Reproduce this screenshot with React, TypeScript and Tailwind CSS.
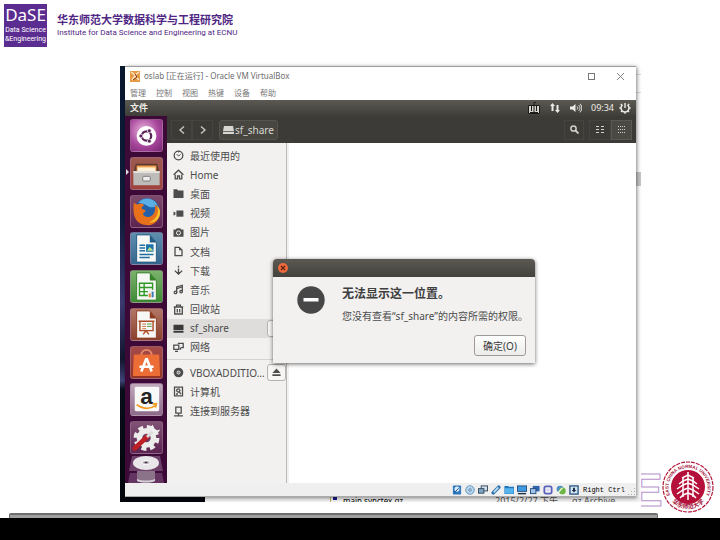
import type { ReactNode } from "react";

const sans = "font-['Noto_Sans','Noto_Sans_CJK_SC',sans-serif]";

const Glyph = ({ children }: { children: ReactNode }) => (
  <svg className="h-[11px] w-[11px] shrink-0" viewBox="0 0 11 11" fill="none" stroke="#4d4d4d" strokeWidth="1.3" aria-hidden="true">
    {children}
  </svg>
);

const places = [
  { name: "最近使用的", icon: <><circle cx="5.5" cy="5.5" r="4.3" /><path d="M5.5 6 3.7 4.2M5.5 6l2-1.5M5.5 1v1.5" strokeWidth="1" /></> },
  { name: "Home", icon: <><path d="M.6 5.8 5.5 1.2l4.9 4.6" /><path d="M2.2 5.5v4.3h2.3V7h2v2.8h2.3V5.5" /></> },
  { name: "桌面", icon: <path d="M.5 10V1.2h3.6L5 2.6h5.5V10z" fill="#4d4d4d" stroke="none" /> },
  { name: "视频", icon: <><path d="M3.4 2.5h7v6.2h-7z" fill="#4d4d4d" stroke="none" /><path d="M.5 3.5 2.5 4.5v2L.5 7.8z" fill="#4d4d4d" stroke="none" /></> },
  { name: "图片", icon: <><path d="M.5 2.5h2.4l.8-1.3h3.6l.8 1.3h2.4v7.3H.5z" fill="#4d4d4d" stroke="none" /><circle cx="5.5" cy="5.9" r="2" fill="#4d4d4d" stroke="#f2f1f0" strokeWidth="1" /></> },
  { name: "文档", icon: <><path d="M2 1.3h4.2L9 4.1v5.6H2z" /><path d="M6 1.3v3h3z" fill="#4d4d4d" stroke="none" /></> },
  { name: "下载", icon: <><path d="M5.5.8v1.6M5.5 3.6v5M1.8 5.6l3.7 3.6 3.7-3.6" /><path d="M5.5 9.8 3.6 7h3.8z" fill="#4d4d4d" stroke="none" /></> },
  { name: "音乐", icon: <><path d="M3.7 8.5V3l5.6-1.6v6" /><path d="M3.7 4.6 9.3 3" /><circle cx="2.5" cy="8.4" r="1.3" /><circle cx="8.1" cy="7.6" r="1.3" /></> },
  { name: "回收站", icon: <><path d="M.8 3h9.4M3.6 3V1.2h3.8V3M1.7 3v7h7.6V3" /><path d="M4.3 5v3.4M6.7 5v3.4" /></> },
  { name: "sf_share", icon: <><path d="M.5 1.8h10v5.4H.5zM.5 8h10v1.8H.5z" fill="#3a3a3a" stroke="none" /></> },
  { name: "网络", icon: <><path d="M4.8 1.3h5.4v4.4H8M.8 3.2h5v4.2h-5z" /><path d="M2 9.4h3M7.4 5.6v2.2" /></> },
];

const devices = [
  { name: "VBOXADDITIO…", eject: true, icon: <><circle cx="5.5" cy="5.5" r="4.8" fill="#4d4d4d" stroke="none" /><circle cx="5.5" cy="5.5" r="1.5" fill="#777" stroke="#f2f1f0" strokeWidth=".9" /></> },
  { name: "计算机", icon: <><path d="M1.5 1.2h8v8.6h-8z" /><circle cx="5.3" cy="4.4" r="1.6" /><path d="m6 5.6 2 2.6M3 8h2" /></> },
  { name: "连接到服务器", icon: <><path d="M2.8 1.2h5.4v6H2.8z" /><path d="M5.5 7v2.7M1 9.8h9" /></> },
];

const EjectIcon = () => (
  <svg className="h-[9px] w-[9px]" viewBox="0 0 9 9" fill="#4d4d4d" aria-hidden="true"><path d="M4.5.5 8.6 5H.4zM.4 6.3h8.2V8H.4z" /></svg>
);

const PlaceRow = ({ name, icon, eject, active }: { name: string; icon: ReactNode; eject?: boolean; active?: boolean }) => (
  <li className={active ? "flex min-h-0 flex-1 items-center bg-[#dedddc]" : "flex min-h-0 flex-1 items-center"}>
    <button type="button" className="flex min-w-0 flex-1 items-center gap-[6px] pl-[6px] text-left text-[10px] leading-[16px] text-[#4c4c4c]">
      <Glyph>{icon}</Glyph>
      <span className="whitespace-nowrap">{name}</span>
    </button>
    {(eject || active) && (
      <button type="button" aria-label={`弹出 ${name}`} className="flex h-[17px] w-[19px] shrink-0 items-center justify-center rounded-[3px] border border-[#b5b2ae] bg-[#f7f6f5]">
        {eject && <EjectIcon />}
      </button>
    )}
  </li>
);

const Page = ({ color, children }: { color: string; children: ReactNode }) => (
  <>
    <path d="M6 2h14l7 8v21H6z" fill="#f7f7f5" stroke={color} strokeWidth="1" />
    <path d="M20 2v8h7z" fill={color} />
    {children}
  </>
);

const launcher = [
  {
    name: "Dash", tile: "bg-[radial-gradient(circle_at_40%_35%,#e9b7dc,#a8479c_55%,#7a2675)]",
    art: <><circle cx="16.5" cy="17" r="10.5" fill="#fff" /><circle cx="16.5" cy="17" r="5" fill="none" stroke="#5b2356" strokeWidth="2.4" /><g fill="#5b2356" stroke="#fff" strokeWidth=".8"><circle cx="10.5" cy="17" r="2.1" /><circle cx="19.5" cy="11.5" r="2.1" /><circle cx="19.5" cy="22.5" r="2.1" /></g></>,
  },
  {
    name: "文件", tile: "bg-gradient-to-b from-[#9d5a50] to-[#a0413c]",
    art: <><path d="M5 6h23l2 9H3z" fill="#5b3a2e" /><path d="M6 8h21v7H6z" fill="#f3a04d" /><path d="M7 10h19v5H7z" fill="#fff1d6" /><path d="M2.5 14h28v15h-28z" fill="#bdbcb8" /><path d="M2.5 14h28v2h-28z" fill="#e4e3df" /><rect x="12.5" y="19.5" width="8" height="5" rx="1" fill="#eee" stroke="#777" /></>,
  },
  {
    name: "Firefox", tile: "bg-gradient-to-b from-[#7d4a6b] to-[#5d2350]",
    art: <><circle cx="17" cy="16" r="13.5" fill="#245fa8" /><path d="M8 7c5-6 15-6 20 2-4 5-9 3-13 0z" fill="#5aaee6" /><path d="M3 7c1 1 3 2 4 2 3-2 6-1 7 1-3 1-3 3-2 4 2 0 4 1 3 3-2 1-3 2-1 4 4 3 9 1 11-4 1-3 1-5 0-8 5 4 7 8 5 13-2 6-8 10-14 9C6 30 1 23 3 7z" fill="#e8701a" /><path d="M27 9c4 7 1 16-8 19 7 1 12-4 12-11 0-3-2-6-4-8z" fill="#fbc02d" /></>,
  },
  {
    name: "Writer", tile: "bg-gradient-to-b from-[#5f8fae] to-[#35668e]",
    art: <Page color="#225b85"><path d="M9 13h6M9 16h6M9 19h6M9 23h15M9 26h11" stroke="#1f6fa5" strokeWidth="1.6" /><path d="M16 12h8v8h-8z" fill="#1b74ad" /><path d="m17 19 3-4 4 4z" fill="#bfe08a" /></Page>,
  },
  {
    name: "Calc", tile: "bg-gradient-to-b from-[#7bb26c] to-[#3c8b35]",
    art: <Page color="#36822b"><path d="M9 13h14v13H9zM9 17.5h14M9 22h14M14 13v13" stroke="#2f9a26" strokeWidth="1.5" fill="none" /><path d="M18 20h7v8h-7z" fill="#eee" /><path d="M19 28v-4h2v4" fill="#e37b28" /><path d="M22 28v-6h2v6" fill="#3477b7" /></Page>,
  },
  {
    name: "Impress", tile: "bg-gradient-to-b from-[#b27767] to-[#8b402d]",
    art: <Page color="#8d3c20"><path d="M8 13h17M9.5 13v10h14V13M13 27l3-4 3 4" stroke="#ad4a24" strokeWidth="1.5" fill="none" /><path d="M12 16h4M12 18.5h4M12 21h4" stroke="#c56d3a" /><path d="M17 16h5M17 18.5h5" stroke="#4b9a3b" /></Page>,
  },
  {
    name: "Ubuntu 软件", tile: "bg-gradient-to-b from-[#a44a4a] to-[#963522]",
    art: <><path d="M11 9c0-8 11-8 11 0" stroke="#e58a6c" strokeWidth="2" fill="none" /><path d="M3 8h27l1 23H2z" fill="#ec6d35" /><path d="M16.5 12 11 26M16.5 12 22 26M9 21h15" stroke="#fff" strokeWidth="2.8" fill="none" /></>,
  },
  {
    name: "Amazon", tile: "bg-gradient-to-b from-[#c0a9bd] to-[#8d6a89]",
    art: <><rect x="4" y="3" width="26" height="26" rx="1.5" fill="#f8f8f8" /><text x="16.5" y="21" textAnchor="middle" fontSize="24" fontWeight="700" fill="#222" fontFamily="Liberation Sans, sans-serif">a</text><path d="M6 22c6 5 14 5 20 1M23 21.5l4-.5-1 4" stroke="#f39a1c" strokeWidth="1.8" fill="none" /></>,
  },
  {
    name: "系统设置", tile: "bg-gradient-to-b from-[#805375] to-[#5c2450]",
    art: <><circle cx="16.5" cy="17" r="11.5" fill="none" stroke="#ececea" strokeWidth="4.5" strokeDasharray="5.2 3.83" /><circle cx="16.5" cy="17" r="7.5" fill="none" stroke="#ececea" strokeWidth="6" /><path d="m4 28 13-12" stroke="#bd1f24" strokeWidth="5" strokeLinecap="round" /><path d="m17 16 7-7" stroke="#ddd" strokeWidth="3" /><path d="M23 3c-3 3-2 7 1 8s6 0 7-3l-4 1-2-2z" fill="#f1f1f1" /></>,
  },
];

const statusIcons = [
  { name: "硬盘", art: <><rect x="1" y="0.5" width="9" height="10" rx="1" fill="#2f78bd" /><circle cx="5.5" cy="4.5" r="2.8" fill="#d9ecfa" /><path d="m2.5 8.5 5-5" stroke="#174f88" /></> },
  { name: "光盘", art: <><circle cx="5.5" cy="5.5" r="4.7" fill="#b9d7ef" stroke="#5f8fb9" /><circle cx="5.5" cy="5.5" r="1.4" fill="#fff" stroke="#4b79a3" /></> },
  { name: "网络", art: <><rect x="3.5" y="1" width="7" height="5.5" fill="#cfe0ee" stroke="#345" /><rect x=".5" y="4" width="6" height="5" fill="#7ea6c8" stroke="#345" /></> },
  { name: "USB", art: <><path d="m2.5 8.5 6-6" stroke="#2c6fa9" strokeWidth="4" strokeLinecap="round" /><path d="m3 8 5-5.5" stroke="#b7ddf6" strokeWidth="2" /></> },
  { name: "共享文件夹", art: <><path d="M.5 1h4l1 1H11v8H.5z" fill="#1b78bf" /><path d="M1 3.5h9.5v6H1z" fill="#55b4ee" /></> },
  { name: "显示", art: <><rect x=".5" y="1" width="10" height="6" fill="#3f9be0" stroke="#1d4f8a" /><path d="M1 9.5h9" stroke="#234" strokeWidth="1.6" /></> },
  { name: "录像", art: <><rect x="3" y="1" width="7.5" height="6" fill="#2e63ad" /><rect x=".5" y="4" width="6" height="5.5" fill="#9ec4e6" stroke="#24467c" /></> },
  { name: "处理器", art: <><rect x="1.5" y="1.5" width="8" height="8" rx="2" fill="#f3f3fb" stroke="#5d61b8" strokeWidth="2" /><path d="M4 4h3v3H4z" fill="#d5d7f0" /></> },
  { name: "鼠标", art: <><circle cx="4.5" cy="4.5" r="3.8" fill="#4a8fc6" /><circle cx="7" cy="6.5" r="3.7" fill="#6db646" /><path d="m2 9 5-6" stroke="#eef7d8" strokeWidth="1.5" /></> },
  { name: "键盘", art: <><rect x="1" y="1" width="9" height="9" fill="#cfe3f2" stroke="#28517b" strokeWidth="1.4" /><path d="M5.5 8 3 5.5h1.5V3h2v2.5H8z" fill="#123" /></> },
];

const TopPanel = () => (
  <div className="flex h-4 items-center justify-between bg-gradient-to-b from-[#5b5952] to-[#3f3e39] px-[5px] text-[9px] leading-[16px] text-[#eeece6]">
    <strong>文件</strong>
    <div className="flex items-center gap-[9px]">
      <svg className="h-3 w-3" viewBox="0 0 12 12" fill="none" stroke="#1c1c1a" strokeWidth="1" aria-hidden="true">
        <path d="M.5 3.5h11v8H.5z" fill="#d5d3cb" /><path d="M3.5 4v5M6 4v6M8.5 4v5M6 3V.5h2M2 10.5h8" />
      </svg>
      <svg className="h-3 w-3" viewBox="0 0 12 12" fill="#eeece6" aria-hidden="true">
        <path d="M3.5 1 6 4H4.5v5h-2V4H1zM8.5 11 11 8H9.5V3h-2v5H6z" />
      </svg>
      <svg className="h-3 w-3" viewBox="0 0 12 12" fill="none" stroke="#eeece6" aria-hidden="true">
        <path d="M0 4.5h2.5L5.5 2v8L2.5 7.5H0z" fill="#eeece6" stroke="none" /><path d="M7 4.5c1 1 1 2 0 3M8.5 3c2 2 2 4 0 6M10 1.8c2.5 3 2.5 5.5 0 8.5" />
      </svg>
      <div className="flex items-center gap-[5px]">
        <time>09:34</time>
        <svg className="h-3 w-3" viewBox="0 0 12 12" fill="none" stroke="#eeece6" aria-hidden="true">
          <path d="M3.5 2.8a4 4 0 1 0 5 0" strokeWidth="1.5" /><path d="M6 1v5" strokeWidth="1.4" /><path d="M.3 6h1.5M10.2 6h1.5M2 10l1-1M10 10 9 9M6 11.8v-1.5M1.8 2l1 1M10.2 2l-1 1" strokeWidth="1.4" />
        </svg>
      </div>
    </div>
  </div>
);

const Toolbar = () => (
  <div className="flex h-[27px] items-center bg-[#3c3b37] px-[4px]">
    <button type="button" aria-label="后退" className="flex h-5 w-[21px] items-center justify-center border border-[#45443f]">
      <svg className="h-2 w-2" viewBox="0 0 8 8" fill="none" stroke="#c9c7c0" strokeWidth="1.4"><path d="M6 .5 2 4l4 3.5" /></svg>
    </button>
    <button type="button" aria-label="前进" className="flex h-5 w-[21px] items-center justify-center border border-[#45443f]">
      <svg className="h-2 w-2" viewBox="0 0 8 8" fill="none" stroke="#c9c7c0" strokeWidth="1.4"><path d="m2 .5 4 3.5-4 3.5" /></svg>
    </button>
    <button type="button" className="ml-[6px] flex h-5 items-center gap-[1px] rounded-[3px] border border-[#55534d] bg-[#474640] px-[3px] text-[10px] leading-[16px] text-[#d8d6d0]">
      <svg className="h-[10px] w-[11px]" viewBox="0 0 11 10" fill="#d8d6d0" aria-hidden="true"><path d="M1 1h9l1 5H0zM0 6.8h11V9H0z" /></svg>
      sf_share
    </button>
    <div className="ml-auto flex items-center">
      <button type="button" aria-label="搜索" className="flex h-5 w-[20px] items-center justify-center border border-[#45443f]">
        <svg className="h-[9px] w-[9px]" viewBox="0 0 9 9" fill="none" stroke="#d2d0ca"><circle cx="3.5" cy="3.5" r="2.6" strokeWidth="1.5" /><path d="m5.5 5.5 3 3" strokeWidth="1.8" /></svg>
      </button>
      <button type="button" aria-label="列表视图" className="ml-[5px] flex h-5 w-[22px] items-center justify-center border border-[#45443f]">
        <svg className="h-[7px] w-[8px]" viewBox="0 0 8 7" fill="#d2d0ca" shapeRendering="crispEdges"><path d="M0 0h3v1H0zM5 0h3v1H5zM0 3h3v1H0zM5 3h3v1H5zM0 6h3v1H0zM5 6h3v1H5z" /></svg>
      </button>
      <button type="button" aria-label="图标视图" className="flex h-5 w-[21px] items-center justify-center border border-[#5a5852] bg-[#4a4943]">
        <svg className="h-[7px] w-[7px]" viewBox="0 0 7 7" fill="#d2d0ca" shapeRendering="crispEdges"><path d="M0 0h1v1H0zM2 0h1v1H2zM4 0h1v1H4zM6 0h1v1H6zM0 3h1v1H0zM2 3h1v1H2zM4 3h1v1H4zM6 3h1v1H6zM0 6h1v1H0zM2 6h1v1H2zM4 6h1v1H4zM6 6h1v1H6z" /></svg>
      </button>
    </div>
  </div>
);

const Launcher = () => (
  <nav aria-label="启动器" className="flex w-[42px] shrink-0 flex-col items-center bg-[#3d0a38] pt-[3px]">
    <ul className="relative flex h-[335px] flex-col justify-between">
      {launcher.map((app) => (
        <li key={app.name}>
          <button type="button" aria-label={app.name} className={`block h-[33px] w-[33px] rounded-[3px] border border-[#a47b9e]/50 ${app.tile}`}>
            <svg className="h-full w-full" viewBox="0 0 33 33" aria-hidden="true">{app.art}</svg>
          </button>
        </li>
      ))}
      <li className="absolute top-[50px] -left-[4px] h-0 w-0 border-y-[3px] border-l-[3px] border-y-transparent border-l-[#ddd]" />
    </ul>
    <svg className="mt-[1px] h-[28px] w-[38px]" viewBox="0 0 38 28" aria-hidden="true">
      <path d="M5 1h28l3 15H2z" fill="#6d4169" />
      <ellipse cx="19" cy="8" rx="13" ry="7" fill="#e8e6e8" />
      <ellipse cx="19" cy="7.5" rx="4" ry="2.2" fill="#b9b4b9" stroke="#fff" />
      <ellipse cx="19" cy="7.5" rx="1.5" ry=".8" fill="#4a3348" />
      <path d="M3 18h32l2 10H1z" fill="#643463" />
      <path d="M10 16h18v10c-4 2-14 2-18 0z" fill="#8b7389" />
      <path d="M10 24c5 2 13 2 18 0v2c-5 2-13 2-18 0z" fill="#d6d0d5" />
    </svg>
  </nav>
);

const ErrorDialog = () => (
  <div role="alertdialog" aria-labelledby="dlg-title" className="absolute top-[192px] left-[148px] w-[262px] rounded-t-[4px] bg-[#f2f1f0] shadow-[0_1px_4px_rgba(0,0,0,0.6)]">
    <div className="flex h-[18px] items-center rounded-t-[4px] bg-gradient-to-b from-[#5b5952] to-[#43423c] px-[5px]">
      <button type="button" aria-label="关闭" className="flex h-[10px] w-[10px] items-center justify-center rounded-full bg-[#ee6a3c]">
        <svg className="h-[6px] w-[6px]" viewBox="0 0 6 6" stroke="#5a2010" strokeWidth="1.2"><path d="m1 1 4 4M5 1 1 5" /></svg>
      </button>
    </div>
    <div className="flex gap-[17px] pt-2 pl-6">
      <svg className="mt-[1px] h-7 w-7 shrink-0" viewBox="0 0 28 28" aria-hidden="true"><circle cx="14" cy="14" r="13.7" fill="#474747" /><path d="M6.5 12h15v3.5h-15z" fill="#fff" /></svg>
      <div className="text-[#4c4c4c]">
        <h2 id="dlg-title" className="text-[12px] leading-[18px] font-bold text-[#3f3f3f]">无法显示这一位置。</h2>
        <p className="mt-1 text-[10px] leading-[18px] whitespace-nowrap">您没有查看“sf_share”的内容所需的权限。</p>
      </div>
    </div>
    <div className="flex justify-end px-[9px] pt-[10px] pb-[7px]">
      <button type="button" className="h-[21px] w-[52px] rounded-[3px] border border-[#9f9c98] bg-gradient-to-b from-white to-[#ececea] text-[10px] leading-[16px] text-[#3c3c3c]">确定(O)</button>
    </div>
  </div>
);

const VmWindow = () => (
  <section className="relative min-w-0 flex-1 border-t border-[#9c9c9c] bg-white shadow-[1px_1px_4px_rgba(0,0,0,0.5)]">
    <header className="flex h-[18px] items-center pr-[12px] pl-[5px]">
      <svg className="h-[11px] w-[10px]" viewBox="0 0 10 11" aria-hidden="true"><path d="M0 0h10v11H0z" fill="#e79a45" /><path d="m1 1 4 3 4-3M2 9l3-4 4 4" stroke="#fbe7c5" strokeWidth="1.4" fill="none" /><path d="m5 3 2 3-4 3" stroke="#7b2f1c" fill="none" /></svg>
      <h1 className="ml-1 text-[8px] leading-[14px] whitespace-nowrap text-[#6d6d6d]">oslab [正在运行] - Oracle VM VirtualBox</h1>
      <div className="ml-auto flex items-center gap-[22px]">
        <button type="button" aria-label="最大化" className="h-[7px] w-[7px] border border-[#777]" />
        <button type="button" aria-label="关闭"><svg className="h-[7px] w-[7px]" viewBox="0 0 7 7" stroke="#777" strokeWidth=".9"><path d="m0 0 7 7M7 0 0 7" /></svg></button>
      </div>
    </header>
    <nav className="flex h-[15px] items-center gap-[10px] pl-[5px] text-[8px] leading-[12px] text-[#777]">
      <button type="button">管理</button>
      <button type="button">控制</button>
      <button type="button">视图</button>
      <button type="button">热键</button>
      <button type="button">设备</button>
      <button type="button">帮助</button>
    </nav>
    <TopPanel />
    <div className="flex">
      <Launcher />
      <div className="flex min-w-0 flex-1 flex-col">
        <Toolbar />
        <div className="flex flex-1">
          <aside className="w-[120px] shrink-0 border-r border-[#bab8b6] bg-[#f2f1f0] pt-[3px]">
            <ul className="flex h-[211px] flex-col">
              {places.map((p) => <PlaceRow key={p.name} {...p} active={p.name === "sf_share"} />)}
            </ul>
            <hr className="mt-[2px] mb-[3px] border-[#d5d3d1]" />
            <ul className="flex h-[58px] flex-col">
              {devices.map((d) => <PlaceRow key={d.name} {...d} />)}
            </ul>
          </aside>
          <div className="flex-1 border-l-2 border-[#f2f1f0] bg-white" />
        </div>
      </div>
    </div>
    <footer className="flex h-[14px] items-center justify-end gap-[3px] border-b border-[#aaa] bg-[#efefef]">
      {statusIcons.map((s) => (
        <svg key={s.name} role="img" aria-label={s.name} className="h-[10px] w-[10px]" viewBox="0 0 11 11" fill="none">{s.art}</svg>
      ))}
      <span className="ml-[1px] font-['Liberation_Mono',monospace] text-[7px] leading-[12px] text-black">Right Ctrl</span>
      <svg className="mt-1 h-2 w-2" viewBox="0 0 8 8" fill="#aaa" aria-hidden="true"><path d="M6 0h1v1H6zM3 3h1v1H3zM6 3h1v1H6zM0 6h1v1H0zM3 6h1v1H3zM6 6h1v1H6z" /></svg>
    </footer>
    <ErrorDialog />
  </section>
);

const Seal = () => (
  <svg className="h-[52px] w-[52px] shrink-0" viewBox="0 0 52 52" role="img" aria-label="East China Normal University">
    <defs>
      <path id="sealTop" d="M9 36A19.5 19.5 0 1 1 43 36" />
      <path id="sealBottom" d="M7 37A22 22 0 0 0 45 37" />
    </defs>
    <circle cx="26" cy="26" r="25" fill="#fff" stroke="#b5173c" strokeWidth="1.2" strokeDasharray="4 1" />
    <circle cx="26" cy="26" r="17" fill="#b5103a" />
    <g fill="#a5123a" fontSize="6" fontWeight="700" fontFamily="Liberation Sans, Noto Sans CJK SC, sans-serif">
      <text fontSize="4.5"><textPath href="#sealTop" startOffset="50%" textAnchor="middle">EAST CHINA NORMAL UNIVERSITY</textPath></text>
      <text><textPath href="#sealBottom" startOffset="50%" textAnchor="middle">华东师范大学</textPath></text>
    </g>
    <g stroke="#fff" fill="none" strokeWidth="1.5">
      <path d="M26 11v28M21 16v20M31 16v20" />
      <path d="m20 17 6-3 6 3M17 23l4-3 5-2 5 2 4 3M15 28l6-4 5-2 5 2 6 4M15 33l6-4 5-2 5 2 6 4M18 37l3-3 5-2 5 2 3 3" />
    </g>
  </svg>
);

const App = () => {
  return (
    <div className={`flex min-h-screen flex-col bg-white ${sans}`}>
      <header className="flex h-[66px] items-start gap-[10px] pt-1 pl-1">
        <div className="flex h-[43px] w-[43px] flex-col items-center bg-[#5c2d91] text-white">
          <span className="text-[17px] leading-[22px] whitespace-nowrap">DaSE</span>
          <span className="font-['Roboto',sans-serif] text-[7px] leading-[9px] whitespace-nowrap">Data Science</span>
          <span className="font-['Roboto',sans-serif] text-[7px] leading-[9px] whitespace-nowrap">&amp;Engineering</span>
        </div>
        <div className="pt-2 text-[#4f2683]">
          <p className="text-[11px] leading-[16px] font-bold">华东师范大学数据科学与工程研究院</p>
          <p className="font-['Roboto',sans-serif] text-[8px] leading-[10px]">Institute for Data Science and Engineering at ECNU</p>
        </div>
      </header>

      <main className="flex">
        <div className="ml-[120px] min-w-0 flex-1 pb-[11px]">
          <div className="flex bg-white">
            <div className="w-[5px] shrink-0 bg-[linear-gradient(#0a1830,#101c3c_35%,#3d3a72_55%,#14162f_68%,#3f4478_73%,#0a0e1c_75%,#05070d)]" />
            <VmWindow />
            <div className="flex w-[5px] shrink-0 flex-col">
              <div className="h-[9px] border-b border-[#ddd]" />
              <div className="h-[18px] border-b border-[#ddd]" />
              <div className="mt-[79px] h-[14px] bg-[#c8c8c8]" />
            </div>
          </div>
          <div className="flex h-[5px] overflow-hidden bg-[#f4f4f4] text-[9px] leading-[8px] whitespace-nowrap text-[#555]">
            <div className="w-[85px] shrink-0 bg-[#05060c]" />
            <div className="ml-[125px] h-full w-[8px] border-l border-[#b9b46a]"><div className="ml-[2px] h-[3px] w-[4px] bg-[#1c1c8c]" /></div>
            <span className="w-[157px] pl-[5px] text-[8px] text-black">main.synctex.gz</span>
            <span className="w-[77px]">2015/2/27 下午</span>
            <span>gz Archive</span>
          </div>
        </div>
        <div className="flex w-[79px] shrink-0 items-end self-end">
          <span className="flex w-[21px] shrink-0 overflow-hidden pb-[3px] font-['Liberation_Sans',sans-serif] text-[46px] leading-[40px] font-bold text-transparent [-webkit-text-stroke:1px_#b995cc]" aria-hidden="true"><span className="-ml-[9px]">E</span></span>
          <Seal />
        </div>
      </main>

      <div className="ml-[9px] mr-[62px] h-[5px] rounded-t-[2px] border-x border-t-2 border-[#6e6e6e] bg-[#a0a0a0]" />
      <div className="min-h-[22px] flex-1 bg-black" />
    </div>
  );
};

export default App;
